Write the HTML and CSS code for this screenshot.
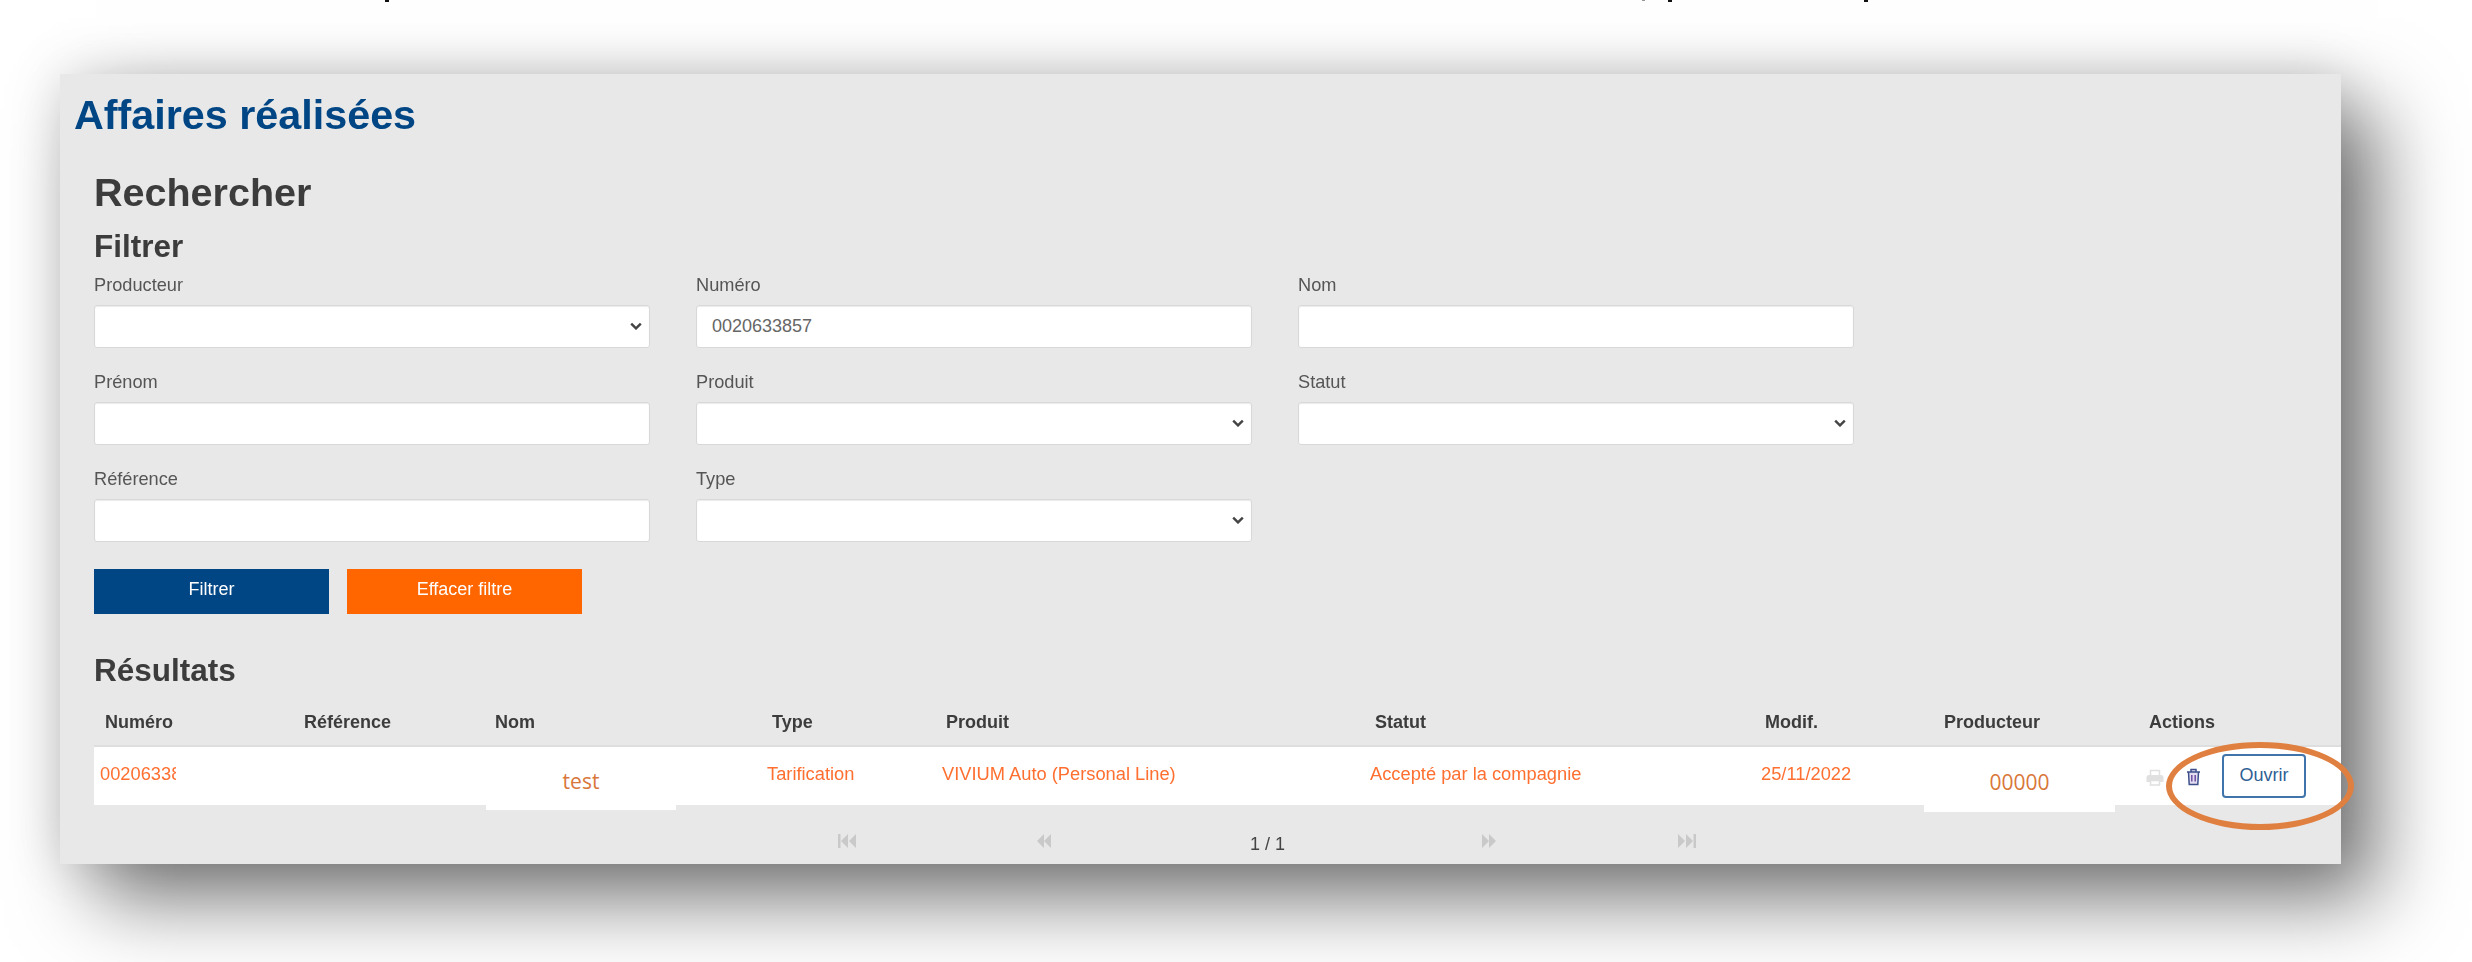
FILE: index.html
```html
<!DOCTYPE html>
<html lang="fr">
<head>
<meta charset="utf-8">
<title>Affaires réalisées</title>
<link rel="stylesheet" href="styles.css">
</head>
<body>
<span class="cut cut-a"></span><span class="cut cut-b"></span><span class="cut cut-c"></span><span class="cut cut-d"></span>
<main class="panel">
  <h1 class="title">Affaires réalisées</h1>
  <div class="content">
    <h2 class="search-title">Rechercher</h2>
    <h3 class="filter-title">Filtrer</h3>
    <form class="filters">
      <label class="field"><span class="label">Producteur</span><span class="control select"><svg class="chev" viewBox="0 0 10 6"><path d="M1 1l4 4 4-4"/></svg></span></label>
      <label class="field"><span class="label">Numéro</span><span class="control">0020633857</span></label>
      <label class="field"><span class="label">Nom</span><span class="control"></span></label>
      <label class="field"><span class="label">Prénom</span><span class="control"></span></label>
      <label class="field"><span class="label">Produit</span><span class="control select"><svg class="chev" viewBox="0 0 10 6"><path d="M1 1l4 4 4-4"/></svg></span></label>
      <label class="field"><span class="label">Statut</span><span class="control select"><svg class="chev" viewBox="0 0 10 6"><path d="M1 1l4 4 4-4"/></svg></span></label>
      <label class="field"><span class="label">Référence</span><span class="control"></span></label>
      <label class="field"><span class="label">Type</span><span class="control select"><svg class="chev" viewBox="0 0 10 6"><path d="M1 1l4 4 4-4"/></svg></span></label>
    </form>
    <div class="buttons">
      <span class="btn btn-blue">Filtrer</span>
      <span class="btn btn-orange">Effacer filtre</span>
    </div>
    <h3 class="results-title">Résultats</h3>
    <div class="table-head">
      <span>Numéro</span><span>Référence</span><span>Nom</span><span>Type</span><span>Produit</span><span>Statut</span><span>Modif.</span><span>Producteur</span><span>Actions</span>
    </div>
    <div class="table-row">
      <span class="cell-num">0020633857</span><span></span><span></span>
      <span>Tarification</span><span>VIVIUM Auto (Personal Line)</span><span>Accepté par la compagnie</span><span>25/11/2022</span><span></span>
      <span class="actions">
        <svg class="ico-print" viewBox="0 0 18 17"><path class="print-paper" d="M4.500 6V1.500h9V6"/><path class="print-body" d="M3 6h12a2.500 2.500 0 0 1 2.500 2.500V13H14v-2H4v2H.5V8.500A2.500 2.500 0 0 1 3 6z"/><path class="print-paper" d="M4.500 11.500h9v4.500h-9z"/></svg>
        <svg class="ico-trash" viewBox="0 0 15 18"><path class="trash-line" d="M1 4h13M5 4V1.500h5V4M2.500 4l.7 12.500h8.600l.7-12.500"/><path class="trash-bars" d="M5.800 7v6.500M9.200 7v6.500"/></svg>
        <span class="open">Ouvrir</span>
      </span>
    </div>
    <div class="pager">
      <svg class="pg" viewBox="0 0 20 16"><path d="M1 1h2.500v14H1zM11 1v14L4 8zM19 1v14l-7-7z"/></svg>
      <svg class="pg pg-narrow" viewBox="0 0 16 16"><path d="M8 1v14L1 8zM15 1v14L8 8z"/></svg>
      <span class="pg-text">1 / 1</span>
      <svg class="pg pg-narrow" viewBox="0 0 16 16"><path d="M1 1v14l7-7zM8 1v14l7-7z"/></svg>
      <svg class="pg" viewBox="0 0 20 16"><path d="M19 1h-2.500v14H19zM1 1v14l7-7zM9 1v14l7-7z"/></svg>
    </div>
  </div>
  <span class="patch patch-nom">test</span>
  <span class="patch patch-prod">00000</span>
  <span class="ring"></span>
</main>
</body>
</html>
```
FILE: styles.css
```css
html, body { margin: 0; height: 100%; background: #fff; overflow: hidden; }
body { padding: 74px 131px 0 60px; box-sizing: border-box; height: 962px; font-family: "Liberation Sans", Arial, sans-serif; }
.cut { position: absolute; top: 0; width: 4px; height: 2px; background: #111; }
.cut-a { left: 385px; }
.cut-b { left: 1642px; width: 3px; height: 1px; background: #999; }
.cut-c { left: 1668px; }
.cut-d { left: 1864px; }
.panel { position: relative; height: 790px; background: #e8e8e8; box-shadow: 36px 36px 76px rgba(0,0,0,.52), 0 0 50px rgba(0,0,0,.14); color: #444; }
.title { margin: 0; padding: 19px 0 0 14px; font-size: 41.300px; line-height: 44px; font-weight: 700; color: #004685; filter: blur(.5px); }
.content { padding: 0 0 0 34px; filter: blur(.5px); }
.search-title { margin: 33px 0 0; font-size: 39.500px; line-height: 45px; font-weight: 700; color: #3c3c3c; }
.filter-title { margin: 14px 0 0; font-size: 31.500px; line-height: 34px; font-weight: 700; color: #3c3c3c; }
.filters { display: grid; grid-template-columns: repeat(3, 556px); column-gap: 46px; row-gap: 22px; margin-top: 10px; }
.field { display: flex; flex-direction: column; }
.label { font-size: 18.200px; line-height: 24px; color: #555; margin-bottom: 8px; }
.control { position: relative; height: 43px; box-sizing: border-box; background: #fff; border: 1px solid #d8d8d8; border-radius: 3px; padding: 0 15px; font-size: 18px; line-height: 41px; color: #666; box-shadow: inset 0 1px 1px rgba(0,0,0,.08); }
.chev { position: absolute; right: 7px; top: 16px; width: 12px; height: 8px; fill: none; stroke: #444; stroke-width: 2; }
.buttons { display: flex; gap: 18px; margin-top: 27px; }
.btn { width: 235px; height: 45px; box-sizing: border-box; text-align: center; font-size: 18px; line-height: 40px; color: #fff; }
.btn-blue { background: #004685; }
.btn-orange { background: #ff6600; }
.results-title { margin: 37px 0 0; font-size: 31.500px; line-height: 38px; font-weight: 700; color: #3c3c3c; }
.table-head, .table-row { display: grid; box-sizing: border-box; }
.table-head { grid-template-columns: 199px 191px 277px 174px 429px 390px 179px 205px 1fr; margin-top: 20px; height: 38px; font-size: 18px; line-height: 26px; font-weight: 700; color: #3c3c3c; border-bottom: 2px solid #dedede; padding-left: 11px; }
.table-row { grid-template-columns: 200px 190px 277px 175px 428px 391px 180px 205px 1fr; height: 58px; background: #fff; font-size: 18.300px; line-height: 53px; color: #ff6f30; padding-left: 6px; }
.cell-num { width: 76px; overflow: hidden; }
.actions { display: flex; align-items: center; height: 58px; }
.ico-print { width: 18px; height: 17px; margin-top: 2px; }
.print-paper { fill: none; stroke: #e0e0e0; stroke-width: 1.500; }
.print-body { fill: #e0e0e0; }
.ico-trash { width: 15px; height: 18px; margin-left: 22px; margin-top: 2px; }
.trash-line { fill: #e4dcef; stroke: #3c4f8c; stroke-width: 1.500; }
.trash-bars { fill: none; stroke: #6a4fa0; stroke-width: 1.500; }
.open { margin-left: 21px; width: 84px; height: 44px; box-sizing: border-box; border: 2px solid #3f75ab; border-radius: 4px; text-align: center; font-size: 18px; line-height: 38px; color: #2f5f95; background: #fff; }
.pager { display: grid; grid-template-columns: 199px 214px 231px 196px 1fr; padding-left: 743px; height: 72px; align-items: center; }
.pg { width: 20px; height: 16px; fill: #c9c9c9; }
.pg-narrow { width: 16px; }
.pg-text { font-size: 18px; color: #444; padding-top: 6px; }
.patch { position: absolute; background: #fff; color: #d9763a; font-family: "Open Sans", sans-serif; font-size: 21px; text-align: center; }
.patch-nom { left: 426px; top: 673px; width: 190px; height: 63px; line-height: 68px; }
.patch-prod { left: 1864px; top: 675px; width: 191px; height: 63px; line-height: 66px; }
.ring { position: absolute; left: 2106px; top: 668px; width: 188px; height: 88px; box-sizing: border-box; border: 6px solid #e08040; border-radius: 50%; }
```
